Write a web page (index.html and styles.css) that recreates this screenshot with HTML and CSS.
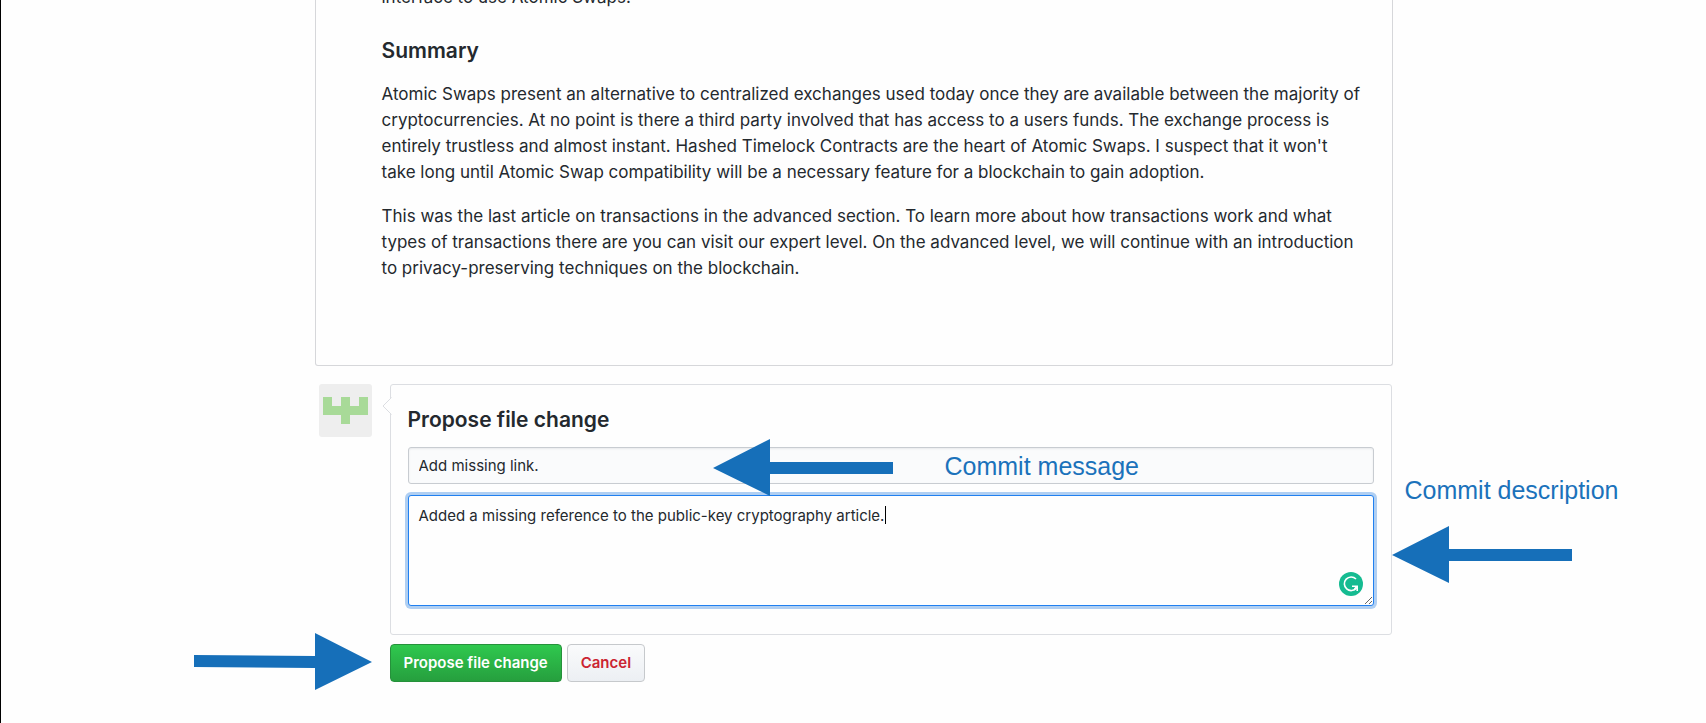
FILE: index.html
```html
<!DOCTYPE html>
<html lang="en">
<head>
<meta charset="utf-8">
<title>Propose file change</title>
<link rel="stylesheet" href="styles.css">
</head>
<body>
<main class="page">
  <article class="preview">
    <p>interface to use Atomic Swaps.</p>
    <h3>Summary</h3>
    <p>Atomic Swaps present an alternative to centralized exchanges used today once they are available between the majority of<br>cryptocurrencies. At no point is there a third party involved that has access to a users funds. The exchange process is<br>entirely trustless and almost instant. Hashed Timelock Contracts are the heart of Atomic Swaps. I suspect that it won't<br>take long until Atomic Swap compatibility will be a necessary feature for a blockchain to gain adoption.</p>
    <p>This was the last article on transactions in the advanced section. To learn more about how transactions work and what<br>types of transactions there are you can visit our expert level. On the advanced level, we will continue with an introduction<br>to privacy-preserving techniques on the blockchain.</p>
  </article>
  <form class="commit">
    <svg class="avatar" viewBox="0 0 53 53" role="img" aria-label="Avatar">
      <rect width="53" height="53" rx="3" fill="#eee"/>
      <path fill="#a8da98" d="M4 13h9v9h9v-9h9v9h9v-9h9v18H31v9h-9v-9H4z"/>
    </svg>
    <div class="commit-main">
      <section class="panel">
        <svg class="notch" viewBox="0 0 10 18" aria-hidden="true"><path d="M10 0v18L1 9z" fill="#fefefe"/><path d="M9.500 .5L1 9l8.500 8.500" fill="none" stroke="#dcdee2"/></svg>
        <h2>Propose file change</h2>
        <div class="field field-subject">
          <input class="control subject" type="text" aria-label="Commit message" value="Add missing link.">
          <svg class="arrow arrow-message" viewBox="0 0 180 58" aria-hidden="true"><path d="M0 29L57 0v23h123v12H57v22z"/></svg>
          <span class="note note-message">Commit message</span>
        </div>
        <div class="field">
          <textarea class="control description" aria-label="Commit description" autofocus>Added a missing reference to the public-key cryptography article.</textarea>
          <span class="caret" aria-hidden="true"></span>
          <svg class="checker" viewBox="0 0 24 24" aria-hidden="true"><circle cx="12" cy="12" r="12" fill="#15bb91"/><path d="M17 7A6.800 6.800 0 1 0 17.500 16" fill="none" stroke="#fff" stroke-width="1.600"/><path d="M13 14.300h5.200v4.700M18 14.300l-2.500 2.800" fill="none" stroke="#fff" stroke-width="1.600"/></svg>
          <svg class="arrow arrow-description" viewBox="0 0 180 58" aria-hidden="true"><path d="M0 29L57 0v23h123v12H57v22z"/></svg>
          <span class="note note-description">Commit description</span>
        </div>
      </section>
      <div class="actions">
        <svg class="arrow arrow-submit" viewBox="0 0 178 58" aria-hidden="true"><path d="M178 29L121 0v23L0 22v12l121 1v22z"/></svg>
        <button class="btn primary" type="submit">Propose file change</button>
        <button class="btn danger" type="button">Cancel</button>
      </div>
    </div>
  </form>
</main>
</body>
</html>
```
FILE: styles.css
```css
* { box-sizing: border-box; }
html { background: #fefefe; }
body {
  margin: 0;
  min-height: 100vh;
  border-left: 1px solid #000;
  overflow: hidden;
  color: #24292e;
  font: 17px/26px Inter, "Liberation Sans", sans-serif;
}
.page { max-width: 1078px; margin: 0 auto; }
.preview {
  margin-top: -16px;
  padding: 0 30px 66px 66px;
  border: 1px solid #d6d7da;
  border-top: 0;
  border-radius: 0 0 3px 3px;
}
.preview p { margin: 0 0 18px; white-space: nowrap; }
.preview h3 { margin: 27px 0 16px; font-size: 21px; line-height: 28px; font-weight: 600; }
.commit { display: flex; gap: 18px; margin-top: 18px; padding: 0 1px 0 4px; }
.avatar { flex: none; width: 53px; height: 53px; }
.commit-main { flex: 1; }
.panel {
  position: relative;
  padding: 21px 17px 28px;
  border: 1px solid #dcdee2;
  border-radius: 3px;
}
.notch { position: absolute; left: -9px; top: 12px; width: 10px; height: 18px; }
h2 { margin: 0 0 13px; font-size: 21px; line-height: 28px; font-weight: 600; }
.field { position: relative; }
.field-subject { z-index: 1; }
.field + .field { margin-top: 11px; }
.control {
  display: block;
  width: 100%;
  padding: 8px 10px;
  border: 1px solid #c8ccd1;
  border-radius: 3px;
  color: #24292e;
  font: 15px/22px Inter, "Liberation Sans", sans-serif;
  outline: 0;
}
.subject { height: 37px; background: #fafbfc; box-shadow: inset 0 1px 2px rgba(27, 31, 35, .08); }
.description {
  height: 111px;
  padding-top: 9px;
  background: #fefefe;
  border-color: #2080f0;
  box-shadow: 0 0 0 3px #b0cff2;
  caret-color: transparent;
  resize: vertical;
}
.caret { position: absolute; left: 477px; top: 11px; width: 1px; height: 18px; background: #000; }
.checker { position: absolute; right: 11px; bottom: 10px; width: 24px; height: 24px; }
.arrow { position: absolute; width: 180px; height: 58px; fill: #166fb9; }
.arrow-message { left: 305px; top: -8px; }
.arrow-description { left: calc(100% + 18px); top: 31px; }
.arrow-submit { right: calc(100% + 18px); top: -11px; width: 178px; }
.note {
  position: absolute;
  color: #1b72bb;
  font: 25px/28px "Liberation Sans", Arial, sans-serif;
  white-space: nowrap;
}
.note-message { left: 537px; top: 5px; }
.note-description { left: calc(100% + 31px); top: -19px; }
.actions { position: relative; display: flex; gap: 5px; margin-top: 9px; }
.btn {
  height: 38px;
  padding: 0 13px;
  border: 1px solid #c6c9cc;
  border-radius: 4px;
  font: 600 15px/22px Inter, "Liberation Sans", sans-serif;
}
.primary { color: #fff; border-color: #26913b; background: linear-gradient(#2fc84e, #269f3e); }
.danger { color: #cb2431; background: linear-gradient(#fafbfc, #eceff3); }
```
